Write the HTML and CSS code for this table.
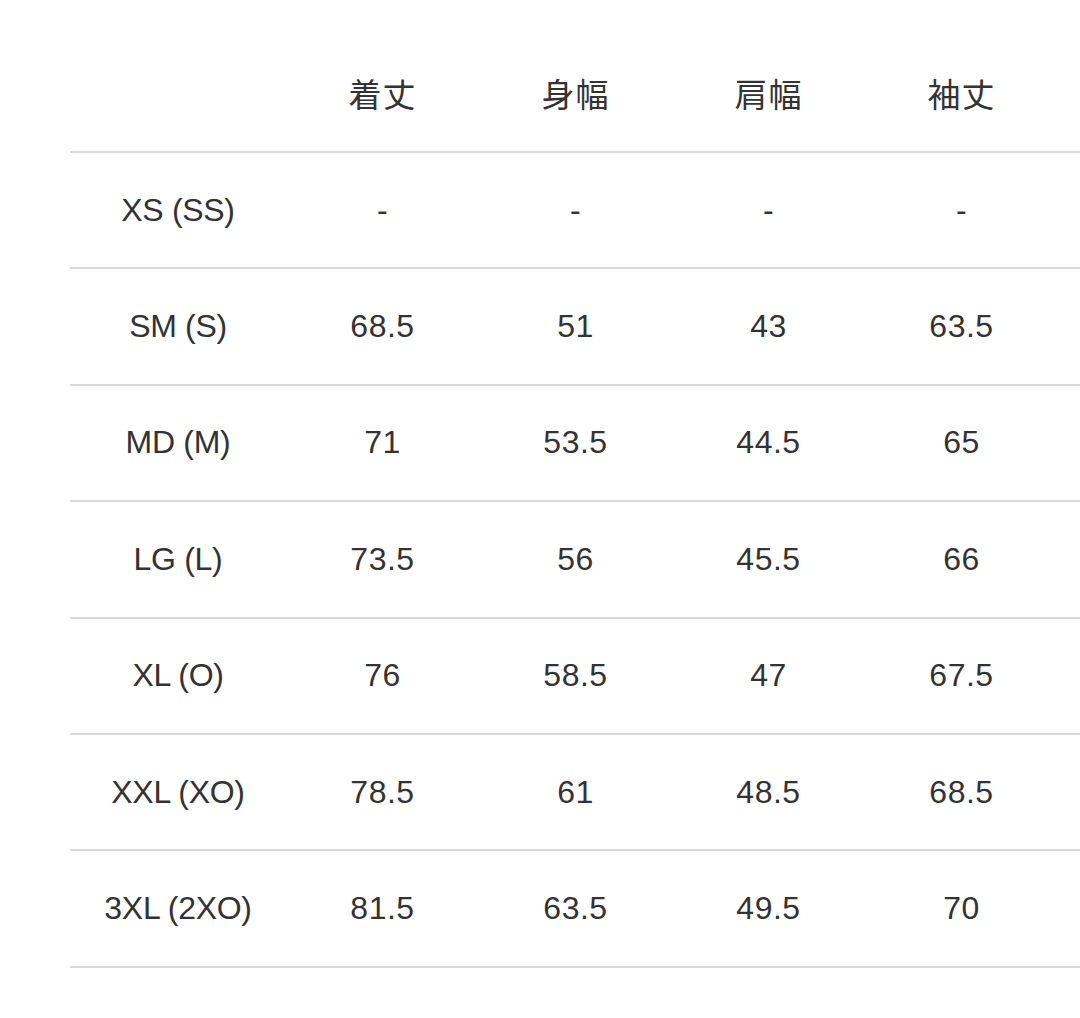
FILE: index.html
```html
<!DOCTYPE html>
<html lang="ja">
<head>
<meta charset="utf-8">
<title>サイズ表</title>
<link rel="stylesheet" href="styles.css">
</head>
<body>
<table class="size-table">
  <colgroup>
    <col class="c-size">
    <col class="c-val">
    <col class="c-val">
    <col class="c-val">
    <col class="c-val">
    <col class="c-rest">
  </colgroup>
  <thead>
    <tr><th></th><th>着丈</th><th>身幅</th><th>肩幅</th><th>袖丈</th><th></th></tr>
  </thead>
  <tbody>
    <tr><td>XS (SS)</td><td>-</td><td>-</td><td>-</td><td>-</td><td></td></tr>
    <tr><td>SM (S)</td><td>68.5</td><td>51</td><td>43</td><td>63.5</td><td></td></tr>
    <tr><td>MD (M)</td><td>71</td><td>53.5</td><td>44.5</td><td>65</td><td></td></tr>
    <tr><td>LG (L)</td><td>73.5</td><td>56</td><td>45.5</td><td>66</td><td></td></tr>
    <tr><td>XL (O)</td><td>76</td><td>58.5</td><td>47</td><td>67.5</td><td></td></tr>
    <tr><td>XXL (XO)</td><td>78.5</td><td>61</td><td>48.5</td><td>68.5</td><td></td></tr>
    <tr><td>3XL (2XO)</td><td>81.5</td><td>63.5</td><td>49.5</td><td>70</td><td></td></tr>
  </tbody>
</table>
</body>
</html>
```
FILE: styles.css
```css
html, body {
  margin: 0;
  padding: 0;
  background: #ffffff;
  overflow: hidden;
}
body {
  padding-top: 35.6px;
  padding-left: 70px;
  font-family: "Liberation Sans", Arial, "Noto Sans CJK JP", sans-serif;
  color: #333333;
}
.size-table {
  width: 1010px;
  table-layout: fixed;
  border-collapse: collapse;
  border-spacing: 0;
}
.c-size { width: 216px; }
.c-val { width: 193px; }
.c-rest { width: 22px; }
.size-table tr {
  height: 116.4px;
  border-bottom: 2px solid #d8d8d8;
}
.size-table th,
.size-table td {
  padding: 0;
  text-align: center;
  vertical-align: middle;
  font-size: 32px;
  font-weight: normal;
  white-space: nowrap;
}
.size-table th {
  font-family: "Noto Sans CJK JP", sans-serif;
  font-size: 33px;
  letter-spacing: 1px;
}
.size-table td:first-child {
  letter-spacing: -0.3px;
}
.size-table td:not(:first-child) {
  letter-spacing: 0.5px;
}
```
